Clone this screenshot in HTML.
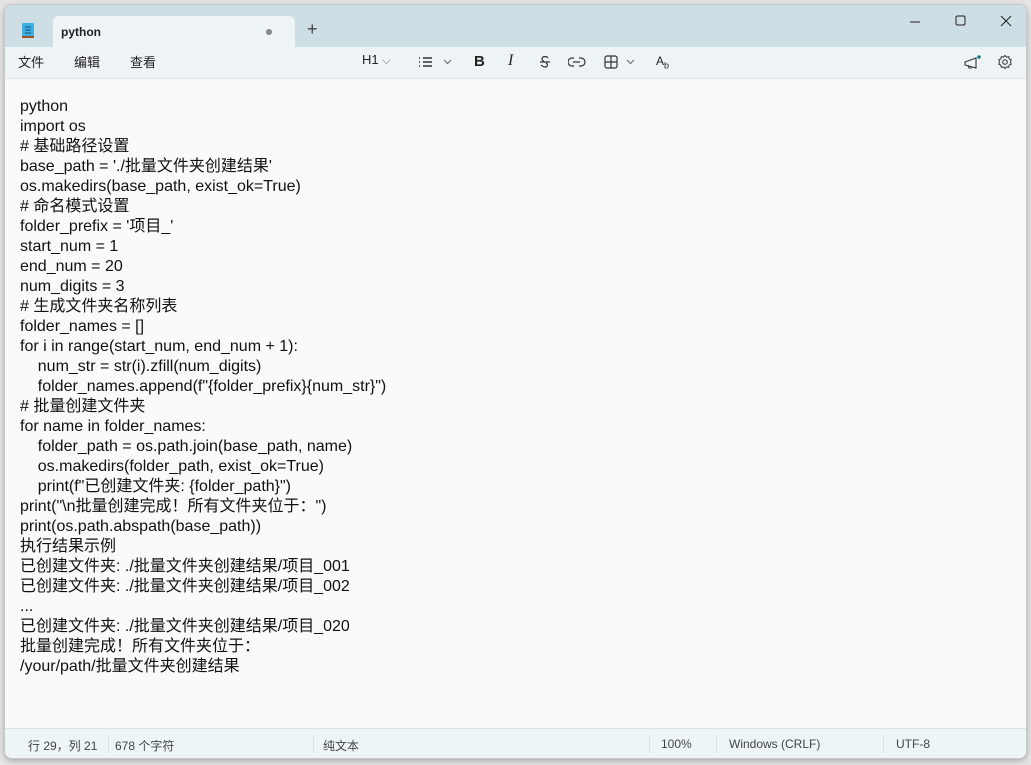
<!DOCTYPE html>
<html><head><meta charset="utf-8"><style>
*{margin:0;padding:0;box-sizing:border-box}
body{width:1031px;height:765px;background:#e4e4e4;font-family:"Liberation Sans","Noto Sans CJK SC",sans-serif;position:relative;overflow:hidden}
.win{position:absolute;left:4px;top:4px;width:1023px;height:755px;border-radius:8px;overflow:hidden;border:1px solid #c8c8c8;background:#fafafa;box-shadow:0 2px 6px rgba(0,0,0,.25)}
.title{position:absolute;left:0;top:0;width:100%;height:42px;background:#cddee4}
.tab{position:absolute;left:48px;top:11px;width:242px;height:32px;background:#eef3f6;border-radius:6px 6px 0 0}
.tab span{position:absolute;left:8px;top:9px;font-size:12px;font-weight:bold;color:#222}
.tab i{position:absolute;left:213px;top:13px;width:6px;height:6px;border-radius:50%;background:#888}
.plus{position:absolute;left:302px;top:14px;font-size:18px;color:#444}
.tb{position:absolute;left:0;top:42px;width:100%;height:32px;background:#eef3f6;border-bottom:1px solid #e0e4e6}
.tb .m{position:absolute;top:5px;font-size:13px;color:#222}
.ed{position:absolute;left:15px;top:92px;font-size:16px;line-height:20px;color:#111;white-space:pre}
.st{position:absolute;left:0;top:723px;width:100%;height:32px;background:#edf5f7;border-top:1px solid #dde3e5;font-size:12px;color:#444}
.st span{position:absolute;top:8px}
.st b{position:absolute;top:6px;width:1px;height:18px;background:#dde3e5}
svg{position:absolute}
</style></head><body>
<div class="win">
<div class="title">
<svg style="left:16px;top:17px" width="14" height="17" viewBox="0 0 14 17"><rect x="1" y="1" width="12" height="15" rx="1" fill="#3bb0e0"/><rect x="1" y="14" width="12" height="2" fill="#a0522d"/><path d="M4 5h6M4 8h6M4 11h6" stroke="#1a4f7a" stroke-width="1"/></svg>
<div class="tab"><span>python</span><i></i></div>
<div class="plus">+</div>
<svg style="left:904px;top:11px" width="12" height="12"><path d="M1 6h10" stroke="#222"/></svg>
<svg style="left:950px;top:10px" width="12" height="12"><rect x="1" y="1" width="9" height="9" rx="1.5" fill="none" stroke="#222"/></svg>
<svg style="left:995px;top:10px" width="12" height="12"><path d="M1 1l10 10M11 1L1 11" stroke="#222"/></svg>
</div>
<div class="tb">
<span class="m" style="left:13px">文件</span><span class="m" style="left:69px">编辑</span><span class="m" style="left:125px">查看</span>
<span class="m" style="left:357px">H1 <small style="color:#666">⌵</small></span>
<svg style="left:413px;top:9px" width="40" height="12"><path d="M1 2h1M1 6h1M1 10h1M5 2h9M5 6h9M5 10h9" stroke="#333" stroke-width="1.4"/><path d="M26 4l3.5 3.5L33 4" stroke="#666" fill="none"/></svg>
<span class="m" style="left:469px;font-weight:bold;font-size:15px;top:6px">B</span>
<span class="m" style="left:503px;font-style:italic;font-size:16px;top:5px;font-family:'Liberation Serif'">I</span>
<svg style="left:532px;top:8px" width="16" height="14"><path d="M11 3C10 1 5 1 5 4c0 1 1 2 2 2M3 7h10M9 8c2 1 2 4-1 4-2 0-3-1-4-2" stroke="#333" fill="none" stroke-width="1.2"/></svg>
<svg style="left:563px;top:9px" width="18" height="12"><path d="M6 2H4a4 4 0 000 8h2M11 2h2a4 4 0 010 8h-2M5 6h7" stroke="#333" fill="none" stroke-width="1.2"/></svg>
<svg style="left:599px;top:7px" width="36" height="16"><rect x="1" y="2" width="12" height="12" rx="2" fill="none" stroke="#333" stroke-width="1.2"/><path d="M7 2v12M1 8h12" stroke="#333" stroke-width="1.2"/><path d="M23 6l3.5 3.5L30 6" stroke="#666" fill="none"/></svg>
<span class="m" style="left:651px;font-size:12px;top:7px">A<sub style="font-size:9px">b</sub></span>
<svg style="left:958px;top:7px" width="20" height="18"><path d="M2 8l11-4v10L2 11zM5 11l1 3h3" stroke="#333" fill="none" stroke-width="1.1"/><circle cx="16" cy="3" r="1.8" fill="#137a8a"/></svg>
<svg style="left:992px;top:7px" width="16" height="16"><circle cx="8" cy="8" r="2.3" fill="none" stroke="#333"/><path d="M8 1.5l1.5 1.6 2.2-.4.5 2.2 2 1-.8 2.1.8 2.1-2 1-.5 2.2-2.2-.4L8 14.5l-1.5-1.6-2.2.4-.5-2.2-2-1 .8-2.1-.8-2.1 2-1 .5-2.2 2.2.4z" fill="none" stroke="#333"/></svg>
</div>
<div class="ed">python
import os
# 基础路径设置
base_path = './批量文件夹创建结果'
os.makedirs(base_path, exist_ok=True)
# 命名模式设置
folder_prefix = '项目_'
start_num = 1
end_num = 20
num_digits = 3
# 生成文件夹名称列表
folder_names = []
for i in range(start_num, end_num + 1):
    num_str = str(i).zfill(num_digits)
    folder_names.append(f"{folder_prefix}{num_str}")
# 批量创建文件夹
for name in folder_names:
    folder_path = os.path.join(base_path, name)
    os.makedirs(folder_path, exist_ok=True)
    print(f"已创建文件夹: {folder_path}")
print("\n批量创建完成！所有文件夹位于：")
print(os.path.abspath(base_path))
执行结果示例
已创建文件夹: ./批量文件夹创建结果/项目_001
已创建文件夹: ./批量文件夹创建结果/项目_002
...
已创建文件夹: ./批量文件夹创建结果/项目_020
批量创建完成！所有文件夹位于：
/your/path/批量文件夹创建结果</div>
<div class="st">
<span style="left:23px">行 29，列 21</span><b style="left:103px"></b>
<span style="left:110px">678 个字符</span><b style="left:308px"></b>
<span style="left:318px">纯文本</span><b style="left:644px"></b>
<span style="left:656px">100%</span><b style="left:711px"></b>
<span style="left:724px">Windows (CRLF)</span><b style="left:878px"></b>
<span style="left:891px">UTF-8</span>
</div>
</div>
</body></html>
